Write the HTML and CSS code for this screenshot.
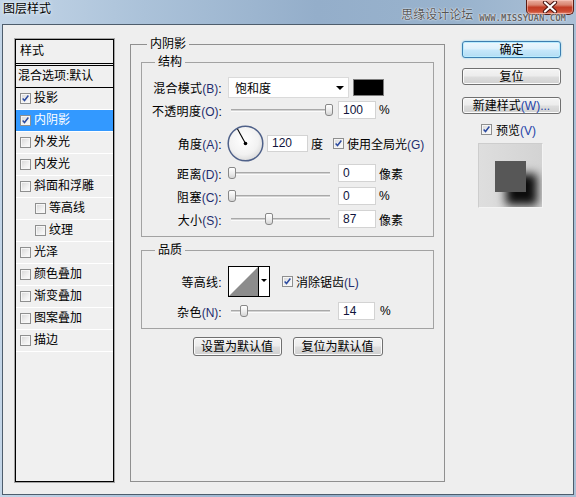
FILE: index.html
```html
<!DOCTYPE html>
<html lang="zh-CN">
<head>
<meta charset="utf-8">
<title>图层样式</title>
<link rel="stylesheet" href="styles.css">
</head>
<body>
<div class="window">
  <div class="titlebar">
    <span class="title">图层样式</span>
    <span class="watermark"><span class="wm-cn">思缘设计论坛</span><span class="wm-en">WWW.MISSYUAN.COM</span></span>
    <span class="close"><svg width="16" height="12" viewBox="0 0 16 12"><path d="M3 1.5 L13 10.5 M13 1.5 L3 10.5" stroke="#4a1410" stroke-width="4.2" stroke-linecap="round"/><path d="M3 1.5 L13 10.5 M13 1.5 L3 10.5" stroke="#fff" stroke-width="2.2" stroke-linecap="round"/></svg></span>
  </div>
  <div class="client">
    <div class="stylelist">
      <div class="list-head">样式</div>
      <div class="list-blend">混合选项:默认</div>
      <div class="list-item"><span class="cb"><svg viewBox="0 0 11 11" width="9" height="9"><path d="M2 5.5 L4.3 8 L9 1.8" fill="none" stroke="#2b4aa0" stroke-width="1.8"/></svg></span>投影</div>
      <div class="list-item selected"><span class="cb"><svg viewBox="0 0 11 11" width="9" height="9"><path d="M2 5.5 L4.3 8 L9 1.8" fill="none" stroke="#2b4aa0" stroke-width="1.8"/></svg></span>内阴影</div>
      <div class="list-item"><span class="cb"></span>外发光</div>
      <div class="list-item"><span class="cb"></span>内发光</div>
      <div class="list-item"><span class="cb"></span>斜面和浮雕</div>
      <div class="list-item sub"><span class="cb"></span>等高线</div>
      <div class="list-item sub"><span class="cb"></span>纹理</div>
      <div class="list-item"><span class="cb"></span>光泽</div>
      <div class="list-item"><span class="cb"></span>颜色叠加</div>
      <div class="list-item"><span class="cb"></span>渐变叠加</div>
      <div class="list-item"><span class="cb"></span>图案叠加</div>
      <div class="list-item"><span class="cb"></span>描边</div>
    </div>

    <fieldset class="panel">
      <legend>内阴影</legend>
      <fieldset class="group">
        <legend>结构</legend>
        <div class="row r1">
          <span class="lbl">混合模式<span class="key">(B)</span>:</span>
          <div class="select">饱和度<span class="arrow"></span></div>
          <span class="swatch"></span>
        </div>
        <div class="row r2">
          <span class="lbl">不透明度<span class="key">(O)</span>:</span>
          <div class="slider"><div class="track"></div><span class="thumb" style="left:97px"></span></div>
          <span class="num">100</span><span class="unit">%</span>
        </div>
        <div class="row r3">
          <span class="lbl">角度<span class="key">(A)</span>:</span>
          <span class="dial"><svg width="37" height="37" viewBox="0 0 37 37"><defs><radialGradient id="dg" cx="45%" cy="40%" r="60%"><stop offset="0" stop-color="#ffffff"/><stop offset="0.7" stop-color="#f2f2f2"/><stop offset="1" stop-color="#dcdcdc"/></radialGradient></defs><circle cx="18.5" cy="18.5" r="17.3" fill="url(#dg)" stroke="#4f6189" stroke-width="1.5"/><path d="M18.5 18.5 L10.5 4" stroke="#000" stroke-width="1.1"/><circle cx="18.5" cy="18.5" r="1.8" fill="#000"/></svg></span>
          <span class="num angle">120</span><span class="unit deg">度</span>
          <span class="cb global"><svg viewBox="0 0 11 11" width="9" height="9"><path d="M2 5.5 L4.3 8 L9 1.8" fill="none" stroke="#2b4aa0" stroke-width="1.8"/></svg></span><span class="cbtext">使用全局光<span class="key">(G)</span></span>
        </div>
        <div class="row r4">
          <span class="lbl">距离<span class="key">(D)</span>:</span>
          <div class="slider"><div class="track"></div><span class="thumb" style="left:0px"></span></div>
          <span class="num">0</span><span class="unit">像素</span>
        </div>
        <div class="row r5">
          <span class="lbl">阻塞<span class="key">(C)</span>:</span>
          <div class="slider"><div class="track"></div><span class="thumb" style="left:0px"></span></div>
          <span class="num">0</span><span class="unit">%</span>
        </div>
        <div class="row r6">
          <span class="lbl">大小<span class="key">(S)</span>:</span>
          <div class="slider"><div class="track"></div><span class="thumb" style="left:37px"></span></div>
          <span class="num">87</span><span class="unit">像素</span>
        </div>
      </fieldset>

      <fieldset class="group quality">
        <legend>品质</legend>
        <div class="row q1">
          <span class="lbl">等高线:</span>
          <div class="contour">
            <span class="curve"><svg width="29" height="29" viewBox="0 0 29 29"><rect width="29" height="29" fill="#fff"/><polygon points="0,29 29,0 29,29" fill="#8c8c8c"/></svg></span>
            <span class="cdrop"><span class="arrow small"></span></span>
          </div>
          <span class="cb anti"><svg viewBox="0 0 11 11" width="9" height="9"><path d="M2 5.5 L4.3 8 L9 1.8" fill="none" stroke="#2b4aa0" stroke-width="1.8"/></svg></span><span class="cbtext">消除锯齿<span class="key">(L)</span></span>
        </div>
        <div class="row q2">
          <span class="lbl">杂色<span class="key">(N)</span>:</span>
          <div class="slider"><div class="track"></div><span class="thumb" style="left:12px"></span></div>
          <span class="num noise">14</span><span class="unit pct">%</span>
        </div>
      </fieldset>

      <div class="defaults">
        <span class="btn wide">设置为默认值</span>
        <span class="btn wide2">复位为默认值</span>
      </div>
    </fieldset>

    <div class="side">
      <span class="btn default">确定</span>
      <span class="btn reset">复位</span>
      <span class="btn newstyle">新建样式<span class="bkey">(W)...</span></span>
      <div class="preview-check"><span class="cb"><svg viewBox="0 0 11 11" width="9" height="9"><path d="M2 5.5 L4.3 8 L9 1.8" fill="none" stroke="#2b4aa0" stroke-width="1.8"/></svg></span><span>预览<span class="bkey">(V)</span></span></div>
      <div class="preview"><span class="sample"></span></div>
    </div>
  </div>
</div>
</body>
</html>
```

FILE: styles.css
```css
* { box-sizing: border-box; }
html, body { margin: 0; padding: 0; }
body {
  width: 576px;
  height: 497px;
  overflow: hidden;
  font-family: "Liberation Sans", "Noto Sans CJK SC", sans-serif;
  font-size: 12px;
  color: #000;
  background: linear-gradient(90deg, #c3d5e7 0%, #abc2d9 25%, #94aeca 55%, #99b3cd 80%, #abc0d6 100%);
}
.window {
  position: relative;
  display: flex;
  flex-direction: column;
  height: 497px;
}
.titlebar {
  flex: none;
  height: 24px;
  display: flex;
  align-items: flex-start;
}
.title {
  margin: 2px 0 0 3px;
  font-size: 12px;
  line-height: 15px;
  text-shadow: 0 0 4px #eef4fa, 0 0 2px #eef4fa;
}
.watermark {
  position: relative;
  z-index: 2;
  margin: 9px 10px 0 auto;
  display: flex;
  align-items: flex-end;
  gap: 6px;
  color: #555;
  text-shadow: 0 0 2px #f4f8fc, 0 0 1px #fff;
}
.wm-cn { font-size: 12px; line-height: 13px; }
.wm-en {
  font-family: "DejaVu Sans Mono", "Liberation Mono", monospace;
  font-size: 9px;
  line-height: 10px;
  font-weight: bold;
  color: #666;
  margin-bottom: -1px;
}
.close {
  position: absolute;
  top: 0;
  right: 2px;
  z-index: 1;
  width: 48px;
  height: 15px;
  border: 1px solid #5b1c12;
  border-top: none;
  border-radius: 0 0 5px 5px;
  background: linear-gradient(180deg, #eab0a2 0%, #d98470 35%, #c23c25 52%, #cc4a30 80%, #e0826a 100%);
  box-shadow: inset 0 0 0 1px rgba(255, 210, 200, 0.5);
  display: flex;
  align-items: center;
  justify-content: center;
}
.client {
  flex: 1;
  margin: 0 2px 2px 2px;
  background: #eeeeee;
  border: 1px solid #4e5d6c;
  display: flex;
  align-items: flex-start;
  padding: 12px 0 0 12px;
}

/* style list */
.stylelist {
  flex: none;
  width: 99px;
  height: 443px;
  margin-top: 2px;
  border: 1px solid #000;
  box-shadow: 0 0 0 1px #a5a5a5;
  background: #f0f0f0;
  font-size: 12px;
}
.list-head {
  height: 26px;
  border-bottom: 3px double #000;
  line-height: 23px;
  padding-left: 4px;
}
.list-blend {
  height: 22px;
  border-bottom: 1px solid #000;
  line-height: 21px;
  padding-left: 2px;
  white-space: nowrap;
}
.list-item {
  height: 22px;
  border-bottom: 1px solid #fff;
  display: flex;
  align-items: center;
  gap: 3px;
  padding-left: 4px;
  line-height: 21px;
  white-space: nowrap;
}
.list-item.sub { padding-left: 19px; }
.list-item.selected { background: #3399ff; color: #fff; }

/* checkbox */
.cb {
  flex: none;
  width: 11px;
  height: 11px;
  border: 1px solid #8e8f8f;
  background: linear-gradient(135deg, #d6d6d6 0%, #f0f0f0 60%, #fdfdfd 100%);
  box-shadow: inset 0 0 0 1px #f6f6f6;
  display: flex;
  align-items: center;
  justify-content: center;
}
.cb svg { display: block; }

/* panel */
.panel {
  flex: none;
  margin: 0 0 0 16px;
  width: 315px;
  height: 445px;
  min-width: 0;
  border: 1px solid #8f8f8f;
  padding: 4px 10px 0 10px;
}
.panel > legend {
  margin-left: 6px;
  padding: 0 3px;
  font-size: 12px;
  line-height: 14px;
}
.group {
  margin: 0;
  min-width: 0;
  border: 1px solid #a2a2a2;
  padding: 8px 10px 8px 10px;
}
.group > legend {
  margin-left: 3px;
  padding: 0 3px;
  font-size: 12px;
  line-height: 14px;
}
.group.quality { margin-top: 6px; padding-top: 9px; }

.row { display: flex; align-items: center; white-space: nowrap; }
.r1 { height: 21px; }
.r2 { height: 18px; margin-top: 3px; }
.r3 { height: 37px; margin-top: 6px; }
.r4 { height: 18px; margin-top: 2px; }
.r5 { height: 18px; margin-top: 5px; }
.r6 { height: 18px; margin-top: 5px; }
.q1 { height: 31px; }
.q2 { height: 18px; margin-top: 5px; }

.lbl {
  flex: none;
  width: 70px;
  margin-right: 6px;
  text-align: right;
  letter-spacing: 0.3px;
}
.key { color: #1f2d6e; letter-spacing: 0; }
.bkey { color: #2443a8; }

.select {
  flex: none;
  width: 121px;
  height: 21px;
  border: 1px solid #dadada;
  background: #fff;
  padding-left: 6px;
  display: flex;
  align-items: center;
}
.arrow {
  margin-left: auto;
  margin-right: 4px;
  width: 0;
  height: 0;
  border-left: 4px solid transparent;
  border-right: 4px solid transparent;
  border-top: 4px solid #000;
}
.arrow.small {
  margin: 0;
  border-left-width: 3px;
  border-right-width: 3px;
  border-top-width: 3px;
}
.swatch {
  flex: none;
  margin-left: 4px;
  width: 31px;
  height: 17px;
  background: #000;
  border: 1px solid #7d7d7d;
}

.slider {
  flex: none;
  position: relative;
  width: 105px;
  height: 18px;
  display: flex;
  align-items: center;
}
.track {
  margin: 0 3px;
  flex: 1;
  height: 3px;
  border-top: 1px solid #a9a9a9;
  border-bottom: 1px solid #fafafa;
  background: #d2d2d2;
}
.thumb {
  position: absolute;
  top: 3px;
  width: 8px;
  height: 12px;
  border: 1px solid #888;
  border-radius: 2px 2px 3px 3px;
  background: linear-gradient(180deg, #ffffff 0%, #eaeaea 60%, #d4d4d4 100%);
}

.num {
  flex: none;
  margin-left: 5px;
  width: 38px;
  height: 18px;
  border: 1px solid #d3d3d3;
  background: #fff;
  padding-left: 4px;
  line-height: 16px;
  color: #10143c;
}
.num.angle { margin-left: 3px; width: 41px; height: 17px; line-height: 15px; }
.num.noise { width: 37px; }
.unit { margin-left: 3px; }
.unit.pct { margin-left: 5px; }
.unit.deg { margin-left: 3px; }

.dial { flex: none; margin-left: -1px; width: 37px; height: 37px; }
.dial svg { display: block; }
.cb.global { margin-left: 10px; }
.cbtext { margin-left: 3px; }

.contour {
  flex: none;
  width: 42px;
  height: 31px;
  border: 1px solid #000;
  display: flex;
}
.curve {
  width: 30px;
  border-right: 1px solid #000;
  background: #fff;
}
.curve svg { display: block; }
.cdrop {
  flex: 1;
  display: flex;
  justify-content: center;
  padding-top: 12px;
  background: #fff;
}
.cb.anti { margin-left: 12px; }

/* buttons */
.btn {
  display: flex;
  align-items: center;
  justify-content: center;
  height: 17px;
  border: 1px solid #707070;
  border-radius: 3px;
  background: linear-gradient(180deg, #f4f4f4 0%, #ececec 48%, #dedede 52%, #d0d0d0 100%);
  box-shadow: inset 0 0 0 1px #fbfbfb;
  font-size: 12px;
  line-height: 14px;
  white-space: nowrap;
}
.defaults {
  display: flex;
  justify-content: center;
  gap: 11px;
  margin-top: 8px;
}
.defaults .btn { height: 19px; }
.btn.wide { width: 89px; }
.btn.wide2 { width: 90px; }

.side {
  flex: none;
  margin: 4px 0 0 17px;
  width: 99px;
  display: flex;
  flex-direction: column;
}
.btn.default {
  border-color: #3c7fb1;
  background: linear-gradient(180deg, #edf7fd 0%, #dcf1fc 48%, #c6e8fb 52%, #b3dcf3 100%);
  box-shadow: inset 0 0 0 1px #b7ecff, 0 0 2px #6fd0f4;
}
.btn.reset { margin-top: 10px; }
.btn.newstyle { margin-top: 12px; }
.preview-check {
  margin-top: 9px;
  height: 13px;
  display: flex;
  align-items: center;
  justify-content: center;
  gap: 4px;
  padding-right: 6px;
}
.preview {
  margin: 7px 0 0 16px;
  width: 65px;
  height: 65px;
  overflow: hidden;
  border: 1px solid #cdcdcd;
  border-right-color: #f4f4f4;
  border-bottom-color: #f4f4f4;
  background: linear-gradient(90deg, #dedede 0%, #d3d3d3 100%);
  padding: 17px 0 0 16px;
}
.sample {
  display: block;
  width: 31px;
  height: 31px;
  background: #575757;
  box-shadow: 11px 13px 9px 0 #0c0c0c;
}
```
